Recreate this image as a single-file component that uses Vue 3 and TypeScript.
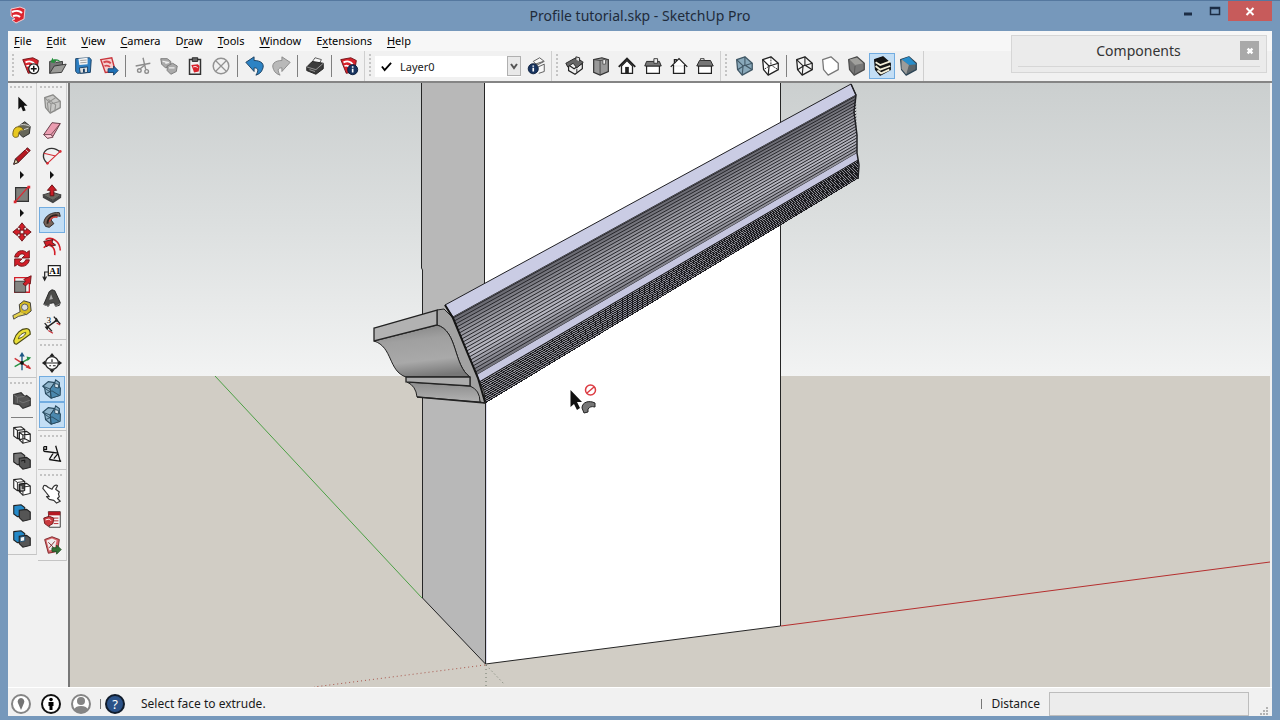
<script setup lang="ts">
interface Tool {
  kind: 'tool'
  icon: string
  label: string
  active?: boolean
}
interface Mark {
  kind: 'sep' | 'more'
}
type Item = Tool | Mark

const t = (icon: string, label: string, active = false): Tool => ({ kind: 'tool', icon, label, active })
const sep: Mark = { kind: 'sep' }
const more: Mark = { kind: 'more' }

const page =
  '<path d="M3 5l11-2 6 3-2 12-9 2z" fill="#d8222b" stroke="#6d1418"/><path d="M6 8c4-2 8-1 10 2M7 12c3-1 5 0 6 2" fill="none" stroke="#fff" stroke-width="2"/>'
const cube = (f: string, s: string, extra = ''): string =>
  `<path d="M4 5l9-3 8 7v7l-11 6-5-6z" fill="${f}" stroke="${s}" stroke-width="1.4" stroke-linejoin="round"/>${extra}`
const wire = (s: string): string =>
  `<path d="M4 5l7 7 10-3M11 12l-1 10M13 2v9l8 5M13 11l-8 5" fill="none" stroke="${s}" stroke-width="1.2"/>`
const backBox = (f: string): string =>
  `<path d="M3 4l8-1 4 3v9l-8 1-4-3z" fill="${f}" stroke="#222" stroke-width="1.2"/>`
const frontBox = (f: string): string =>
  `<path d="M9 9l8-1 4 3v8l-8 2-4-4z" fill="${f}" stroke="#222" stroke-width="1.2"/>`
const infoDot = (x: number, y: number): string =>
  `<circle cx="${x}" cy="${y}" r="5.5" fill="#17335f" stroke="#0a1c3a"/><path d="M${x} ${y - 1}v4M${x} ${y - 3.6}v1.5" stroke="#fff" stroke-width="1.8"/>`
const houseCube =
  '<path d="M2 9l6-5 7 1 1-3 4 3v4l1 2-1 8-9 3-6-5-1-6z" fill="#8fb4cb" stroke="#27485d" stroke-width="1.2"/><path d="M10 12l4-6 7 5v8l-10 3z" fill="#4b88ae" stroke="#27485d"/><path d="M2 9l8 3 5-7M10 12l1 10M4 11l7 5M5 17l7-3 8 5" fill="none" stroke="#27485d"/><path d="M15 6l4 1v4l-4-1z" fill="#dce8ef" stroke="#27485d"/>'

const icons: Record<string, string> = {
  newFile: page + '<circle cx="15" cy="15" r="5.4" fill="#fff" stroke="#222" stroke-width="1.4"/><path d="M15 11.800v6.400M11.800 15h6.400" stroke="#111" stroke-width="1.6"/>',
  open: '<path d="M4 20V7l5-1 2 2 7-1v4" fill="#777" stroke="#333"/><path d="M4 20l5-8 13-2-5 9z" fill="#9b9b98" stroke="#333"/><path d="M5 8l2-5 1 2c4-1 7 0 8 3-3-2-5-2-7-1l1 2z" fill="#258f3c"/>',
  save: '<path d="M4 4l15-1 2 2-1 14-14 1-2-2z" fill="#2e7fc2" stroke="#163d63"/><path d="M7 4l10-1v7l-9 1z" fill="#f4f4f4"/><path d="M9 6l7-.5M9 8.500l7-.5" stroke="#999"/><path d="M8 14l9-1v6l-8 1z" fill="#ddd" stroke="#163d63"/><path d="M13 15v4" stroke="#163d63" stroke-width="2"/>',
  share: '<path d="M3 5l12-2 4 15-11 1z" fill="#f5d0d0" stroke="#c9353c" stroke-width="1.500"/><path d="M6 8c4-2 6-1 8 1M7 12c3-1 5 0 6 1" fill="none" stroke="#d5464d" stroke-width="2"/><path d="M11 15h6v-3l5 5-5 5v-3h-6z" fill="#1e72b8" stroke="#174066"/>',
  cut: '<g fill="none" stroke="#8c8c8c" stroke-width="1.500"><path d="M12 3l3 13M4 12l16-3"/><circle cx="16" cy="18" r="2"/><circle cx="8" cy="17" r="2"/><path d="M9 15l5-4"/></g>',
  copy: '<path d="M3 4l7 0 4 3 0 5-6 2-4-4z" fill="#aaa" stroke="#777"/><path d="M10 12l6-3 5 3-1 6-6 3-4-4z" fill="#aaa" stroke="#777"/><path d="M5 7l6 1M12 14l6 0M8 9l4-1" stroke="#eee" stroke-width="1.500"/>',
  paste: '<path d="M6 5h12v16H6z" fill="#f3f3f3" stroke="#333" stroke-width="1.600"/><path d="M9 3h6v4H9z" fill="#666" stroke="#222"/><path d="M8 11l7-1 2 2-1 6-5 1z" fill="#d8222b"/><path d="M10 13c3-1 4 0 5 1" stroke="#fff" fill="none"/>',
  erase: '<circle cx="12" cy="12" r="8.500" fill="none" stroke="#929292" stroke-width="1.600"/><path d="M6 6l12 12M18 6L6 18" stroke="#929292" stroke-width="1.400"/>',
  undo: '<path d="M2 8l9-6v4c8 0 12 4 9 10-1 3-4 5-7 6 3-5 3-8-2-8v4z" fill="#2d83c4" stroke="#1b3d5b"/>',
  redo: '<path d="M22 8l-9-6v4c-8 0-12 4-9 10 1 3 4 5 7 6-3-5-3-8 2-8v4z" fill="#b9b9b9" stroke="#888"/>',
  print: '<path d="M8 9l4-6 7 2-3 6z" fill="#f5f5f5" stroke="#555"/><path d="M3 13l6-6 12 2v6l-8 6-10-4z" fill="#3b3b3b" stroke="#1c1c1c"/><path d="M3 13l10 3 8-7M6 16l6 2" stroke="#999" fill="none"/>',
  modelInfo: page + infoDot(16, 16),
  layerInfo: '<path d="M9 7l7-4 5 4-8 4zM8 11l12-4M10 15l11-5v8l-6 2" fill="#f7f7f7" stroke="#555"/>' + infoDot(9, 15),
  iso: '<path d="M5 11l6 4 9-6v6l-8 6-7-4z" fill="#eee" stroke="#222" stroke-width="1.300"/><path d="M2 9l9-5 3-1 7 5-7 6-4-5-6 4z" fill="#666" stroke="#222"/><path d="M13 5V2l4 1v4" stroke="#222" fill="#ddd"/><path d="M14 15v4" stroke="#222"/>',
  top: '<path d="M4 5l9-2 7 2v13l-9 4-7-3z" fill="#999" stroke="#333" stroke-width="1.300"/><path d="M11 6v16M4 5l7 1 9-1" stroke="#444" fill="none"/><path d="M14 5h3v5h-3z" fill="#eee" stroke="#555"/>',
  front: '<path d="M6 12v8h12v-8l-6-6z" fill="#fff" stroke="#222" stroke-width="1.400"/><path d="M3 13l9-9 9 9" fill="none" stroke="#222" stroke-width="2"/><path d="M10 13h4v7h-4z" fill="#222"/>',
  right: '<path d="M5 12h14v8H5z" fill="#fff" stroke="#222" stroke-width="1.300"/><path d="M5 7h14l2 5H3z" fill="#777" stroke="#222"/><path d="M13 4h4v5h-4z" fill="#eee" stroke="#333"/>',
  back: '<path d="M3 13l9-9 9 9M6 11v9h12v-9M7 9V5h2v2" fill="#fff" stroke="#222" stroke-width="1.400"/>',
  left: '<path d="M5 12h14v8H5z" fill="#fff" stroke="#222" stroke-width="1.300"/><path d="M6 6h12l3 6H3z" fill="#777" stroke="#222"/><path d="M7 4h4v2H7z" fill="#eee" stroke="#333"/>',
  xray: cube('#89a9bb', '#415866', wire('#415866')),
  backEdges: cube('#fff', '#222', '<path d="M4 5l7 7 10-3M11 12l-1 10" fill="none" stroke="#222" stroke-width="1.300"/><path d="M13 2v9l8 5M13 11l-8 5" fill="none" stroke="#222" stroke-dasharray="2 1"/>'),
  wireframe: cube('#f5f5f5', '#222', wire('#222')),
  hidden: cube('#fff', '#777'),
  shaded: cube('#777', '#4a4a4a', '<path d="M5 5l8-2 7 6-9 2z" fill="#a0a09d"/><path d="M11 12l-1 10" stroke="#555"/>'),
  textured: cube('#161616', '#111', '<path d="M5 8l5 3 11-4M5 12l5 4 11-4M7 17l4 3 9-4" fill="none" stroke="#f2eed8" stroke-width="2"/>'),
  mono: cube('#5b656b', '#2d4556', '<path d="M5 5l8-3 8 8-8 1z" fill="#288dca"/><path d="M5 5l8 6-3 10-5-6z" fill="#9c9c9a"/>'),
  select: '<path d="M8 4v14l3-3 2 5 3-1-2-5h4z" fill="#111"/>',
  paint: '<path d="M8 8l7-5 6 5-1 8-7 4-5-5z" fill="#666659" stroke="#222"/><path d="M8 8c2-3 9-2 13 0M10 13l9-3" fill="none" stroke="#ddd"/><path d="M2 17c0-6 3-10 9-8l3 3c-4 0-6 2-6 7-3 2-6 1-6-2z" fill="#e8c820" stroke="#66551a"/>',
  line: '<path d="M3 21l2-6L18 3l3 3L8 19z" fill="#b71922" stroke="#551015"/><path d="M3 21l2-6 3 4z" fill="#e6d1aa" stroke="#222"/><path d="M16 5l3 3" stroke="#ddd"/>',
  rect: '<path d="M5 5h14v15H5z" fill="#7f7f7b" stroke="#333" stroke-width="1.300"/><path d="M5 20L19 4" stroke="#dc2931" stroke-width="1.400"/><path d="M3 19h3v3H3zM18 3h3v3h-3z" fill="#dc2931"/>',
  move: '<path d="M12 2l4 5h-2v3h-4V7H8zM12 22l4-5h-2v-3h-4v3H8zM2 12l5-4v2h3v4H7v2zM22 12l-5-4v2h-3v4h3v2z" fill="#d31e28" stroke="#6d1418"/>',
  rotate: '<path d="M4 11c1-7 9-9 13-5l3-2v8h-8l3-3c-3-3-6-1-7 2z" fill="#d31e28" stroke="#6d1418"/><path d="M20 14c-1 7-9 9-13 5l-3 2v-8h8l-3 3c3 3 6 1 7-2z" fill="#d31e28" stroke="#6d1418"/>',
  scale: '<path d="M4 5h16v16H4z" fill="#eee" stroke="#d31e28" stroke-width="1.400"/><path d="M4 9h12v12H4z" fill="#858582" stroke="#333"/><path d="M13 12l3-3-2-2 8-4-1 9-2-1-3 3z" fill="#d31e28" stroke="#6d1418"/>',
  tape: '<path d="M9 6l5-4 7 2 1 9-5 4-7-2z" fill="#d6bb23" stroke="#333"/><circle cx="15" cy="9" r="3.500" fill="#ddd" stroke="#555"/><path d="M10 14l-8 4 1 4 5-3 8-2" fill="#e6d34e" stroke="#444"/>',
  protractor: '<path d="M3 17C5 9 11 4 17 4c3 0 4 2 4 6L6 21c-2 0-3-2-3-4z" fill="#eadf38" stroke="#4c4a17" stroke-width="1.300"/><path d="M8 15c1-4 4-6 8-7 1 2-4 6-8 7z" fill="#f5f5ef" stroke="#4c4a17"/>',
  axes: '<g fill="none" stroke-width="1.500"><path d="M12 21V4" stroke="#1d5784"/><path d="M4 17l16-9" stroke="#279245"/><path d="M4 8l17 11" stroke="#cc3338"/></g><path d="M9 6l3-5 3 5z" fill="#1d5784"/><path d="M17 6l5 1-4 4z" fill="#279245"/><path d="M16 18l6 2-3-5z" fill="#cc3338"/><circle cx="12" cy="13" r="2" fill="#111"/>',
  outer: '<path d="M3 5l8-2 4 4 2-1 4 3v8l-8 3-4-4-6-1z" fill="#555" stroke="#333" stroke-width="1.300"/><path d="M3 5l4 3 8-1M9 12l4 2 8-3M7 8v6" stroke="#777" fill="none"/>',
  intersect: backBox('#fff') + frontBox('#fff') + '<path d="M3 4l4 3v9M7 7l8-1M9 9l4 3v9M13 12l8-1M15 8v8l6 3M9 17l6-1M9 9v8" fill="none" stroke="#222" stroke-width="1.200"/>',
  union: backBox('#777') + frontBox('#555') + '<path d="M11 12l4-1v3" fill="none" stroke="#111"/>',
  subtract: backBox('#fff') + frontBox('#fff') + '<path d="M3 4l4 3v9M7 7l8-1M13 21v-9l8-1" fill="none" stroke="#222"/><path d="M9 9l6-1v8l-6 1z" fill="#444" stroke="#111"/><path d="M11 11v4h3" stroke="#eee" fill="none"/>',
  trim: backBox('#2489c8') + frontBox('#555'),
  split: backBox('#2489c8') + frontBox('#555') + '<path d="M10 10l5-1v5l-5 1z" fill="#f5f5f5" stroke="#174e75"/>',
  component: cube('#c8c8c6', '#8a8a88', '<path d="M4 5l7 7 10-3M11 12l-1 10M8 7l8 6-1 7M16 5l-9 6 1 8" fill="none" stroke="#929290" stroke-width="1.200"/>'),
  eraser: '<path d="M3 17L12 4l9 1-8 14-6 2z" fill="#eb9db1" stroke="#5d3540"/><path d="M3 17l8 0L21 5M11 17l2 2" fill="none" stroke="#754652"/><path d="M3 17h8l2 3-6 1z" fill="#ffd0dc" stroke="#754652"/>',
  arc: '<path d="M7 20C0 14 2 6 9 4c5-1 9 1 12 4" fill="none" stroke="#333" stroke-width="1.500"/><path d="M7 20L21 7M3 9l13 3" stroke="#d62f37" stroke-width="1.300"/><circle cx="7" cy="20" r="1.500" fill="#d62f37"/><circle cx="21" cy="7" r="1.500" fill="#d62f37"/>',
  pushpull: '<path d="M2 13l10-3 10 3-9 6z" fill="#696962" stroke="#333"/><path d="M2 13v3l11 6 9-6v-3l-9 6z" fill="#444"/><path d="M10 14V8H7l5-6 5 6h-3v6z" fill="#c91e27" stroke="#651014"/>',
  follow: '<path d="M3 15C4 7 12 3 20 4l1 4c-6-1-9 1-10 4l3 4-5 4-4-1z" fill="#77645a" stroke="#2b2523"/><path d="M7 16c0-6 5-10 11-9" fill="none" stroke="#2d211d" stroke-width="2"/><path d="M9 14c2-5 5-6 9-5" fill="none" stroke="#ce423b" stroke-width="1.500"/>',
  offset: '<path d="M5 5C12 1 21 7 21 17M3 14c5-6 13-2 12 8" fill="none" stroke="#d31e28" stroke-width="1.700"/><path d="M3 7l10-2-1 3 4 3-4 1-3-2-3 3z" fill="#d31e28" stroke="#4e1718"/>',
  text: '<path d="M8 5h13v11H8z" fill="#fff" stroke="#222" stroke-width="1.300"/><path d="M8 12H4v8M2 17l2 4 2-4" fill="none" stroke="#222" stroke-width="1.300"/><text x="9" y="14" font-family="Liberation Serif, serif" font-weight="bold" font-size="10">A1</text>',
  text3d: '<path d="M3 19l6-14 3-2 3 1 6 13-1 3-4 1-2-4-4 1-2 3z" fill="#4c4c4a" stroke="#222"/><path d="M11 8l2 5-4 1z" fill="#aaa"/><path d="M3 19l5 2 2-3M14 18l2 3 5-3" stroke="#888" fill="none"/>',
  dimension: '<path d="M6 16L17 8M4 11l8 9M14 4l7 8" stroke="#222" stroke-width="1.500" fill="none"/><path d="M8 19l5 3M17 11l4 2" stroke="#c42a32" stroke-width="1.300"/><path d="M4 15l5-1-2 5zM19 9l-5 1 3-5z" fill="#222"/><text x="6" y="11" font-family="Liberation Serif, serif" font-size="10">3</text>',
  section: '<circle cx="12" cy="12" r="7" fill="#fff" stroke="#222" stroke-width="1.300"/><path d="M12 1l3 4H9zM12 23l3-4H9zM1 12l4-3v6zM23 12l-4-3v6z" fill="#222"/><path d="M5 12h14M12 8v3M9 15h2M13 15h3" stroke="#222" stroke-width="1.300"/>',
  planes: houseCube,
  cuts: houseCube,
  angle: '<path d="M3 9l16 2M9 18l13 2M16 3l5 17M3 4v5M3 4h3v3h-3M9 18l5-8M19 11l-5 6" fill="none" stroke="#111" stroke-width="1.400"/>',
  hand: '<path d="M3 4c2-1 3 0 5 2l4 2c1-3 4-6 6-4l-2 4 4 3-1 2 1 3-2 2 3 3-4 2-3-3-5-1-3-3 3 0-3-4-4-5z" fill="#fff" stroke="#333" stroke-width="1.300" stroke-linejoin="round"/>',
  warehouse: '<path d="M8 4h13v17H9z" fill="#f5f5f5" stroke="#333"/><path d="M8 4h13v4H8z" fill="#b51922"/><path d="M14 11h5M14 14h5M14 17h5" stroke="#b51922"/><path d="M3 11l6-2 5 2-1 6-5 3-4-3z" fill="#c93a3e" stroke="#6d1418"/><path d="M5 13l4-1 2 2" stroke="#fff" fill="none"/>',
  extension: '<path d="M4 6l8-3 8 3-2 13-10 2z" fill="#d76469" stroke="#792326"/><path d="M6 7l6-2 5 2-2 9-6 2z" fill="#eee"/><path d="M8 9l6 6M15 8l-6 7" stroke="#792326"/><path d="M12 15h5v-3l5 5-5 5v-3h-5z" fill="#327234" stroke="#26522a"/>',
}

const menus = [
  ['', 'F', 'ile'], ['', 'E', 'dit'], ['', 'V', 'iew'], ['', 'C', 'amera'], ['D', 'r', 'aw'],
  ['', 'T', 'ools'], ['', 'W', 'indow'], ['E', 'x', 'tensions'], ['', 'H', 'elp'],
]

const standard: Item[] = [
  t('newFile', 'New'), t('open', 'Open'), t('save', 'Save'), t('share', 'Share Model'), sep,
  t('cut', 'Cut'), t('copy', 'Copy'), t('paste', 'Paste'), t('erase', 'Erase'), sep,
  t('undo', 'Undo'), t('redo', 'Redo'), sep, t('print', 'Print'), sep, t('modelInfo', 'Model Info'),
]
const views: Item[] = [
  t('iso', 'Iso'), t('top', 'Top'), t('front', 'Front'), t('right', 'Right'), t('back', 'Back'), t('left', 'Left'),
]
const styles: Item[] = [
  t('xray', 'X-Ray'), t('backEdges', 'Back Edges'), sep, t('wireframe', 'Wireframe'), t('hidden', 'Hidden Line'),
  t('shaded', 'Shaded'), t('textured', 'Shaded With Textures', true), t('mono', 'Monochrome'),
]
const columns: Item[][][] = [
  [
    [
      t('select', 'Select'), t('paint', 'Paint Bucket'), t('line', 'Line'), more, t('rect', 'Rectangle'), more,
      t('move', 'Move'), t('rotate', 'Rotate'), t('scale', 'Scale'), t('tape', 'Tape Measure'),
      t('protractor', 'Protractor'), t('axes', 'Axes'),
    ],
    [
      t('outer', 'Outer Shell'), sep, t('intersect', 'Intersect'), t('union', 'Union'), t('subtract', 'Subtract'),
      t('trim', 'Trim'), t('split', 'Split'),
    ],
  ],
  [
    [
      t('component', 'Make Component'), t('eraser', 'Eraser'), t('arc', 'Arc'), more, t('pushpull', 'Push/Pull'),
      t('follow', 'Follow Me', true), t('offset', 'Offset'), t('text', 'Text'), t('text3d', '3D Text'),
      t('dimension', 'Dimensions'),
    ],
    [t('section', 'Section Plane'), t('planes', 'Display Section Planes', true), t('cuts', 'Display Section Cuts', true)],
    [t('angle', 'Angle')],
    [t('hand', 'Interact'), t('warehouse', '3D Warehouse'), t('extension', 'Extension Warehouse')],
  ],
]

type Point = [number, number]
const ruled = (a: Point, b: Point, c: Point, d: Point, count: number) =>
  Array.from({ length: count }, (_, i) => {
    const k = i / (count - 1)
    return {
      x1: a[0] + (b[0] - a[0]) * k,
      y1: a[1] + (b[1] - a[1]) * k,
      x2: c[0] + (d[0] - c[0]) * k,
      y2: c[1] + (d[1] - c[1]) * k,
    }
  })
const upperRidges = ruled([453, 318], [475, 376], [856, 96], [857, 153], 20)
const lowerRidges = ruled([479, 382], [485, 403], [858, 160], [858, 178], 12)
</script>

<template>
  <div class="window">
    <header class="titlebar">
      <svg class="logo" viewBox="0 0 16 18" aria-hidden="true">
        <path d="M1 3l9-2 5 2-1 10-8 4-4-3 3-1-4-3z" fill="#dc2630" stroke="#f2cdd0" />
        <path d="M2 6c4-2 8-1 10 1M3 10c3-1 5-1 7 1" fill="none" stroke="#fff" stroke-width="2" />
      </svg>
      <h1>Profile tutorial.skp - SketchUp Pro</h1>
      <div class="controls">
        <button type="button" aria-label="Minimize"><svg viewBox="0 0 12 12"><path d="M2 9h8" stroke="#1c2d45" stroke-width="3" /></svg></button>
        <button type="button" aria-label="Maximize"><svg viewBox="0 0 12 12"><path d="M1.500 2.500h9v7h-9zM1.500 3.500h9" fill="none" stroke="#1c2d45" stroke-width="1.500" /></svg></button>
        <button type="button" class="close" aria-label="Close"><svg viewBox="0 0 12 12"><path d="M2.500 3l7 7M9.500 3l-7 7" stroke="#fff" stroke-width="2" /></svg></button>
      </div>
    </header>

    <div class="client">
      <nav class="menubar">
        <button v-for="m in menus" :key="m.join('')" type="button">{{ m[0] }}<u>{{ m[1] }}</u>{{ m[2] }}</button>
      </nav>

      <div class="toolbars">
        <div class="group">
          <span class="grip"></span>
          <template v-for="(it, i) in standard" :key="i">
            <button v-if="it.kind === 'tool'" type="button" class="tool" :title="it.label" :aria-label="it.label">
              <svg viewBox="0 0 24 24" v-html="icons[it.icon]"></svg>
            </button>
            <span v-else class="sep"></span>
          </template>
        </div>
        <div class="group">
          <span class="grip"></span>
          <div class="layer">
            <svg class="check" viewBox="0 0 12 12" aria-hidden="true"><path d="M1 6l3 4 7-8" fill="none" stroke="#000" stroke-width="2" /></svg>
            <select aria-label="Active layer"><option>Layer0</option></select>
            <span class="drop"><svg viewBox="0 0 10 10"><path d="M2 3l3 4 3-4" fill="none" stroke="#555" stroke-width="2" /></svg></span>
          </div>
          <button type="button" class="tool" aria-label="Layer Manager">
            <svg viewBox="0 0 24 24" v-html="icons.layerInfo"></svg>
          </button>
        </div>
        <div v-for="(bar, b) in [views, styles]" :key="b" class="group">
          <span class="grip"></span>
          <template v-for="(it, i) in bar" :key="i">
            <button v-if="it.kind === 'tool'" type="button" class="tool" :class="{ active: it.active }" :title="it.label" :aria-label="it.label">
              <svg viewBox="0 0 24 24" v-html="icons[it.icon]"></svg>
            </button>
            <span v-else class="sep"></span>
          </template>
        </div>
      </div>

      <main class="work">
        <div v-for="(col, c) in columns" :key="c" class="column">
          <div v-for="(grp, g) in col" :key="g" class="stack">
            <span class="grip flat"></span>
            <template v-for="(it, i) in grp" :key="i">
              <button v-if="it.kind === 'tool'" type="button" class="tool" :class="{ active: it.active }" :title="it.label" :aria-label="it.label">
                <svg viewBox="0 0 24 24" v-html="icons[it.icon]"></svg>
              </button>
              <span v-else-if="it.kind === 'more'" class="more"></span>
              <span v-else class="sep flat"></span>
            </template>
          </div>
        </div>

        <div class="viewport">
          <svg viewBox="70 83 1200 604" preserveAspectRatio="xMidYMid slice" role="img" aria-label="Model view">
            <defs>
              <linearGradient id="sky" x1="0" y1="0" x2="0" y2="1">
                <stop offset="0" stop-color="#cbcfcf" />
                <stop offset="0.5" stop-color="#dde0e0" />
                <stop offset="1" stop-color="#f2f3f3" />
              </linearGradient>
              <linearGradient id="ridge" gradientUnits="userSpaceOnUse" x1="640" y1="215" x2="672" y2="273">
                <stop offset="0" stop-color="#66666e" />
                <stop offset="0.25" stop-color="#96969e" />
                <stop offset="0.6" stop-color="#b8b8c2" />
                <stop offset="1" stop-color="#5a5a62" />
              </linearGradient>
              <linearGradient id="cove" x1="0.3" y1="0" x2="0.5" y2="1">
                <stop offset="0" stop-color="#858585" />
                <stop offset="0.3" stop-color="#a0a0a0" />
                <stop offset="0.7" stop-color="#a9a9a9" />
                <stop offset="1" stop-color="#777777" />
              </linearGradient>
              <linearGradient id="foot" x1="0" y1="0" x2="0" y2="1">
                <stop offset="0" stop-color="#8c8c8c" />
                <stop offset="1" stop-color="#b2b2b2" />
              </linearGradient>
            </defs>
            <rect x="-400" y="83" width="2200" height="294" fill="url(#sky)" />
            <rect x="-400" y="376" width="2200" height="800" fill="#d1cdc5" />
            <path d="M215 376L422 598" stroke="#4ca045" />
            <path d="M781 626L1270 562" stroke="#b52f2f" />
            <path d="M485 665L314 687" stroke="#a85349" stroke-dasharray="1 3" />
            <path d="M486 665v22M486 665l19 20" stroke="#6c7768" stroke-dasharray="1 3" />

            <path d="M422 83H485V664L422 598z" fill="#b8b8b8" />
            <path d="M485 83H781V626L485 664z" fill="#fff" />
            <path d="M421.500 83V268L422.500 270V598L485.500 664L780.500 626V83M484.500 83V290M485.500 403V664" fill="none" stroke="#252525" />
            <path d="M486.500 403V663" stroke="#ddddee" stroke-width="1" />

            <path d="M445 305L851 84L856 95L453 317z" fill="#cacce4" stroke="#202024" />
            <path d="M453 317L856 95L854 112L857 135L857 154L475 376z" fill="url(#ridge)" />
            <line v-for="(l, i) in upperRidges" :key="i" v-bind="l" stroke="#26262a" />
            <path d="M479 381L858 159L859 178L485 403z" fill="#8c8c94" />
            <g shape-rendering="crispEdges">
              <line v-for="(l, i) in lowerRidges" :key="i" v-bind="l" stroke="#1c1c20" />
            </g>
            <path d="M475 376L857 153L858 160L479 382z" fill="#c6c7e0" />
            <path d="M479 382L858 160" stroke="#202024" />
            <path d="M851 84L856 95L854 112L857 135L857 153L859 165L858 179" fill="none" stroke="#202024" stroke-width="1.500" />

            <path d="M437 310L444 309L453 318L478 378L484 391L485 403L480 402Q478 391 470 386V377C453 365 458 331 437 325z" fill="#a2a2a2" stroke="#222" />
            <path d="M445 305L453 318L478 378L485 402" fill="none" stroke="#151515" stroke-width="2" />
            <path d="M374 341L437 325C458 331 453 365 470 377H406C388 371 393 347 374 341z" fill="url(#cove)" stroke="#222" />
            <path d="M374 328L437 310V325L374 341z" fill="#b2b2b2" stroke="#222" stroke-width="1.300" />
            <path d="M407 382L470 386Q480 390 480 402L417 397Q416 386 407 382z" fill="url(#foot)" stroke="#222" />
            <path d="M406 377H470V386L406 382z" fill="#acacac" stroke="#222" stroke-width="1.300" />
            <path d="M417 397L485 403" stroke="#222" stroke-width="1.300" />

            <path d="M570.500 390V407L574 404L577 410L580 408L577 402H582z" fill="#111" />
            <circle cx="590.500" cy="390" r="5" fill="#fff" stroke="#dc3b42" stroke-width="1.500" />
            <path d="M587 393L594 387" stroke="#dc3b42" stroke-width="1.500" />
            <path d="M582 408C582 402 589 400 595 403V407C591 406 590 407 588 409V412L584 413z" fill="#777" stroke="#222" />
          </svg>
        </div>
      </main>

      <footer class="status">
        <button type="button" aria-label="Geo-location"><svg viewBox="0 0 22 22"><circle cx="11" cy="11" r="9" fill="#fff" stroke="#858585" stroke-width="2" /><path d="M11 5a3.500 3.500 0 0 1 3 5l-3 7-3-7a3.500 3.500 0 0 1 3-5z" fill="#757575" /></svg></button>
        <button type="button" aria-label="Credits"><svg viewBox="0 0 22 22"><circle cx="11" cy="11" r="9" fill="#fff" stroke="#111" stroke-width="2" /><circle cx="11" cy="6.500" r="1.800" /><path d="M8.500 9h5v4h-1v4h-3v-4h-1z" /></svg></button>
        <button type="button" aria-label="Sign in"><svg viewBox="0 0 22 22"><circle cx="11" cy="11" r="9" fill="#fff" stroke="#858585" stroke-width="2" /><circle cx="11" cy="8" r="4" fill="#858585" /><path d="M4 17q1-4 7-4t7 4q-7 5-14 0z" fill="#858585" /></svg></button>
        <span class="tick"></span>
        <button type="button" class="help" aria-label="Help"><span>?</span></button>
        <p>Select face to extrude.</p>
        <span class="tick"></span>
        <label for="distance">Distance</label>
        <input id="distance" type="text" />
        <svg class="resize" viewBox="0 0 10 10" aria-hidden="true"><path d="M7 1h2v2H7zM4 4h2v2H4zM7 4h2v2H7zM1 7h2v2H1zM4 7h2v2H4zM7 7h2v2H7z" fill="#b3b3b3" /></svg>
      </footer>
    </div>

    <aside class="palette">
      <h2>Components</h2>
      <button type="button" aria-label="Close Components"><svg viewBox="0 0 10 10"><path d="M3 3l4 4M7 3L3 7" stroke="#fff" stroke-width="2" /></svg></button>
    </aside>
  </div>
</template>

<style>
body {
  margin: 0;
}
</style>

<style scoped>
.window {
  position: relative;
  box-sizing: border-box;
  display: flex;
  flex-direction: column;
  height: 100vh;
  padding: 0 8px 4px;
  background: #7698bb;
  border-top: 1px solid #55789f;
  font-family: "Noto Sans", "Open Sans", sans-serif;
  font-size: 12px;
  color: #1a1a1a;
}
button {
  padding: 0;
  border: 0;
  background: none;
  font: inherit;
  color: inherit;
}
svg {
  display: block;
}
.titlebar {
  display: grid;
  grid-template-columns: 1fr auto 1fr;
  height: 30px;
  flex: none;
}
.logo {
  width: 16px;
  height: 18px;
  margin: 5px 2px;
}
h1 {
  margin: 0;
  font-size: 14px;
  font-weight: 400;
  line-height: 30px;
  color: #1f2b3a;
}
.controls {
  display: flex;
  justify-content: flex-end;
  align-items: flex-start;
}
.controls button {
  display: grid;
  place-items: center;
  width: 27px;
  height: 20px;
}
.controls svg {
  width: 12px;
  height: 12px;
}
.controls .close {
  width: 44px;
  background: #c75b5b;
}
.client {
  display: flex;
  flex: 1;
  min-height: 0;
  flex-direction: column;
  background: #f1f1f1;
}
.menubar {
  display: flex;
  gap: 15px;
  height: 20px;
  padding: 0 6px;
  background: #f7f7f7;
  font-size: 11px;
  color: #000;
}
.menubar button {
  line-height: 20px;
}
u {
  text-underline-offset: 2px;
}
.toolbars {
  display: flex;
  height: 30px;
  border-bottom: 2px solid #858585;
}
.group {
  display: flex;
  align-items: center;
  padding-right: 2px;
  border-right: 1px solid #cfcfcf;
}
.grip {
  width: 2px;
  height: 24px;
  margin: 0 4px;
  background: repeating-linear-gradient(#c4c4c4 0 2px, transparent 2px 4px);
}
.grip.flat {
  width: 24px;
  height: 2px;
  margin: 3px 0;
  background: repeating-linear-gradient(90deg, #c4c4c4 0 2px, transparent 2px 4px);
}
.tool {
  box-sizing: border-box;
  display: grid;
  place-items: center;
  flex: none;
  width: 26px;
  height: 26px;
}
.tool svg {
  width: 22px;
  height: 22px;
}
.active {
  background: #c3def5;
  border: 1px solid #72ace0;
}
.sep {
  width: 1px;
  height: 22px;
  margin: 0 4px 0 3px;
  background: #808080;
}
.sep.flat {
  width: 22px;
  height: 1px;
  margin: 3px 0 4px;
}
.layer {
  display: flex;
  align-items: center;
  height: 21px;
  width: 146px;
  margin-right: 2px;
  background: #fff;
}
.check {
  width: 11px;
  height: 11px;
  margin-left: 6px;
}
select {
  flex: 1;
  height: 21px;
  margin-left: 4px;
  padding: 0 4px;
  appearance: none;
  border: 0;
  background: none;
  font: inherit;
  font-size: 11px;
  color: inherit;
}
.drop {
  display: grid;
  place-items: center;
  box-sizing: border-box;
  width: 14px;
  height: 20px;
  border: 1px solid #b0b0b0;
  background: #e9e9e9;
  pointer-events: none;
}
.drop svg {
  width: 10px;
  height: 10px;
}
.work {
  display: flex;
  flex: 1;
  min-height: 0;
}
.column {
  width: 29px;
  flex: none;
  padding-right: 1px;
}
.stack {
  display: flex;
  flex-direction: column;
  align-items: center;
  padding-bottom: 2px;
  border-right: 1px solid #cfcfcf;
  border-bottom: 1px solid #c4c4c4;
}
.stack + .stack .grip {
  margin: 4px 0;
}
.more {
  width: 0;
  height: 0;
  margin: 2px 0;
  border: 4px solid transparent;
  border-left-color: #111;
  border-right-width: 0;
}
.viewport {
  flex: 1;
  min-width: 0;
  margin-right: 2px;
  border-left: 2px solid #777;
}
.viewport svg {
  width: 100%;
  height: 100%;
}
.status {
  box-sizing: border-box;
  display: flex;
  align-items: center;
  flex: none;
  height: 29px;
  padding: 3px 3px 0 2px;
  border-top: 1px solid #fff;
}
.status button {
  margin-right: 8px;
}
.status button svg {
  width: 22px;
  height: 22px;
}
.tick {
  width: 1px;
  height: 10px;
  background: #777;
}
.status .help {
  width: 20px;
  height: 20px;
  margin: 0 16px 0 4px;
  border: 2px solid #101c2c;
  border-radius: 50%;
  background: #2b5288;
  color: #fff;
  font-size: 13px;
  line-height: 16px;
}
p {
  flex: 1;
  margin: 0;
}
label {
  margin: 0 9px;
}
input {
  box-sizing: border-box;
  width: 200px;
  height: 24px;
  border: 1px solid #bdbdbd;
  background: #ececec;
}
.resize {
  align-self: flex-end;
  width: 10px;
  height: 10px;
  margin-left: 10px;
}
.palette {
  position: absolute;
  top: 34px;
  right: 13px;
  box-sizing: border-box;
  display: grid;
  grid-template-columns: 18px 1fr 19px;
  align-items: center;
  width: 256px;
  height: 38px;
  padding: 0 7px 7px;
  border: 1px solid #d6d6d6;
  background: linear-gradient(#d6d6d6, #d6d6d6) 50% 30px / 242px 1px no-repeat #ebebeb;
}
.palette h2 {
  grid-column: 2;
  margin: 0;
  text-align: center;
  font-size: 14px;
  font-weight: 400;
  line-height: 20px;
  color: #333;
}
.palette button {
  display: grid;
  place-items: center;
  width: 19px;
  height: 19px;
  background: #a9a9a9;
}
.palette svg {
  width: 12px;
  height: 12px;
}
</style>
